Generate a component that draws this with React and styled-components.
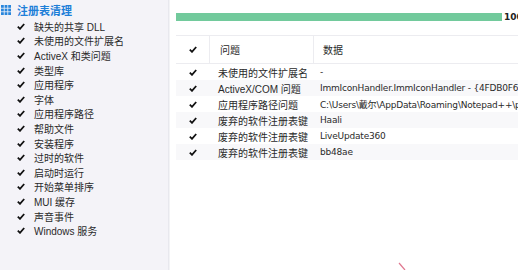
import styled, { createGlobalStyle } from "styled-components";

const Global = createGlobalStyle`
  html, body { margin: 0; padding: 0; background: #fff; }
  body { font-family: "Liberation Sans", "Noto Sans CJK SC", sans-serif; }
`;

const Page = styled.div`
  display: flex;
  width: 518px;
  height: 270px;
  overflow: hidden;
  position: relative;
  background: #fff;
`;

const Sidebar = styled.div`
  width: 169px;
  flex-shrink: 0;
  background: #f4f3f8;
  border-right: 1px solid #e8e8ee;
  padding-top: 3px;
  box-sizing: border-box;
`;

const SideHeader = styled.div`
  display: flex;
  align-items: center;
  height: 14px;
  padding-left: 1px;
  gap: 6px;
  color: #1e7fd8;
  font-weight: 700;
  font-size: 11px;
  margin-bottom: 2px;
`;

const SideItem = styled.div`
  display: flex;
  align-items: center;
  height: 14.6px;
  padding-left: 17px;
  gap: 9px;
  font-size: 10px;
  color: #2a2a2a;
  white-space: nowrap;
`;

const Main = styled.div`
  flex: 1;
  min-width: 0;
  padding-left: 6px;
  background: #fff;
  border-left: 1px solid #f3f3f6;
`;

const ProgressRow = styled.div`
  display: flex;
  align-items: center;
  margin-top: 12px;
  gap: 2px;
  white-space: nowrap;
`;

const Bar = styled.div`
  width: 326px;
  height: 8px;
  background: #72ca9c;
  flex-shrink: 0;
`;

const Percent = styled.span`
  font-family: "DejaVu Sans", sans-serif;
  font-weight: 700;
  font-size: 9px;
  color: #222;
`;

const Table = styled.div`
  margin-top: 13px;
  width: 400px;
  border-top: 1px solid #ececf0;
`;

const Row = styled.div`
  display: grid;
  grid-template-columns: 34px 104px 1fr;
  height: ${(p) => (p.$head ? "27px" : "16px")};
  background: ${(p) => (p.$alt ? "#f8f8fa" : "#fff")};
  border-bottom: ${(p) => (p.$head ? "1px solid #ececf0" : "none")};
  font-size: 10px;
  color: #2a2a2a;
`;

const Cell = styled.div`
  display: flex;
  align-items: center;
  justify-content: ${(p) => (p.$center ? "center" : "flex-start")};
  padding-left: ${(p) => p.$pad || 0}px;
  border-right: ${(p) => (p.$line ? "1px solid #ececf0" : "none")};
  white-space: nowrap;
  overflow: hidden;
`;

const Data = styled.span`
  font-family: "DejaVu Sans", "Noto Sans CJK SC", sans-serif;
  font-size: 9px;
  letter-spacing: -0.2px;
`;

const Cursor = styled.svg`
  position: absolute;
  left: 398px;
  top: 262px;
`;

const Check = () => (
  <svg width="8" height="7" viewBox="0 0 8 7">
    <path d="M0.8 3.6 L3 5.8 L7.2 1" fill="none" stroke="#111" strokeWidth="1.8" />
  </svg>
);

const GridIcon = () => (
  <svg width="10" height="10" viewBox="0 0 10 10">
    {[0, 3.6, 7.2].map((y) =>
      [0, 3.6, 7.2].map((x) => (
        <rect key={`${x}-${y}`} x={x} y={y} width="2.8" height="2.8" fill="#2a86dc" />
      ))
    )}
  </svg>
);

const items = [
  "缺失的共享 DLL",
  "未使用的文件扩展名",
  "ActiveX 和类问题",
  "类型库",
  "应用程序",
  "字体",
  "应用程序路径",
  "帮助文件",
  "安装程序",
  "过时的软件",
  "启动时运行",
  "开始菜单排序",
  "MUI 缓存",
  "声音事件",
  "Windows 服务",
];

const rows = [
  ["未使用的文件扩展名", "-"],
  ["ActiveX/COM 问题", "ImmIconHandler.ImmIconHandler - {4FDB0F61-E4C1-4E7C-A5E1}"],
  ["应用程序路径问题", "C:\\Users\\戴尔\\AppData\\Roaming\\Notepad++\\plugins"],
  ["废弃的软件注册表键", "Haali"],
  ["废弃的软件注册表键", "LiveUpdate360"],
  ["废弃的软件注册表键", "bb48ae"],
];

export default function App() {
  return (
    <Page>
      <Global />
      <Sidebar>
        <SideHeader>
          <GridIcon />
          注册表清理
        </SideHeader>
        {items.map((t) => (
          <SideItem key={t}>
            <Check />
            {t}
          </SideItem>
        ))}
      </Sidebar>
      <Main>
        <ProgressRow>
          <Bar />
          <Percent>100%</Percent>
        </ProgressRow>
        <Table>
          <Row $head>
            <Cell $center $line>
              <Check />
            </Cell>
            <Cell $pad={10} $line>问题</Cell>
            <Cell $pad={9}>数据</Cell>
          </Row>
          {rows.map(([a, b], i) => (
            <Row key={i} $alt={i % 2 === 1}>
              <Cell $center>
                <Check />
              </Cell>
              <Cell $pad={8}>{a}</Cell>
              <Cell $pad={6}>
                <Data>{b}</Data>
              </Cell>
            </Row>
          ))}
        </Table>
      </Main>
      <Cursor width="10" height="10" viewBox="0 0 10 10">
        <path d="M1 1 L7 8" stroke="#e07890" strokeWidth="1.2" />
      </Cursor>
    </Page>
  );
}
